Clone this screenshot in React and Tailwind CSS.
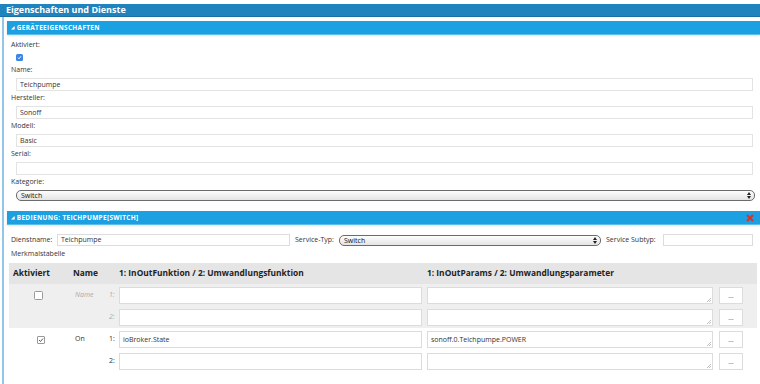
import React from 'react';

const Label = ({ children, className = '' }) => (
  <div className={`h-[12px] leading-[12px] ${className}`}>{children}</div>
);

const Field = ({ label, value }) => (
  <div>
    <Label className="mt-[1px]">{label}</Label>
    <div className="ml-[5px] mr-[7px] h-[13px] border border-[#e3e3e3] bg-white px-[3px] leading-[11px] mt-[2px]">{value}</div>
  </div>
);

const Select = ({ value, className = '' }) => (
  <div className={`flex items-center h-[11px] rounded-[5px] border border-[#6b6b6b] bg-gradient-to-b from-[#fdfdfd] to-[#e4e4e4] pl-[4px] pr-[3px] ${className}`}>
    <span className="flex-1 leading-[9px] text-[#111]">{value}</span>
    <svg width="4" height="7" viewBox="0 0 4 7"><path d="M0 3 L2 0 L4 3 Z M0 4 L2 7 L4 4 Z" fill="#222" /></svg>
  </div>
);

const Bar = ({ title, close }) => (
  <div className="flex items-center h-[14px] bg-[#1ba0e1] border-b border-[#5fbdea] shadow-[0_1px_2px_rgba(0,0,0,0.12)] pl-[4px] pr-[5px] text-white font-bold text-[6.5px] tracking-[0.3px] uppercase">
    <span className="text-[4.5px] mr-[2px]">◢</span>
    <span className="flex-1">{title}</span>
    {close && (
      <svg width="8" height="8" viewBox="0 0 8 8" className="mr-[1px]">
        <path d="M1 1 L7 7 M7 1 L1 7" stroke="#d9342b" strokeWidth="2.2" />
      </svg>
    )}
  </div>
);

const Textarea = ({ value }) => (
  <div className="relative flex-1 h-[17px] border border-[#dcdcdc] bg-white px-[3px] leading-[15px]">
    {value}
    <svg width="5" height="5" viewBox="0 0 5 5" className="absolute right-[1px] bottom-[1px]">
      <path d="M1 5 L5 1 M3 5 L5 3" stroke="#999" strokeWidth="0.6" />
    </svg>
  </div>
);

const SubRow = ({ num, fn, param, dim }) => (
  <div className="flex items-center h-[17px]">
    <span className={`w-[13px] pl-[5px] ${dim ? 'italic text-[#aaa]' : 'text-[#333]'}`}>{num}</span>
    <div className="w-[307px] pl-[2px] pr-[2px]">
      <div className="h-[17px] border border-[#dcdcdc] bg-white px-[3px] leading-[15px]">{fn}</div>
    </div>
    <div className="w-[292px] flex pl-[3px] pr-[3px]">
      <Textarea value={param} />
    </div>
    <div className="flex-1 pl-[3px]">
      <div className="w-[24px] h-[17px] border border-[#dcdcdc] bg-white flex items-center justify-center text-[#555] leading-none">…</div>
    </div>
  </div>
);

const Row = ({ checked, name, rows, dim, bg }) => (
  <div className={`flex ${bg} pt-[3px] pb-[2px]`}>
    <div className="w-[58px] flex justify-center h-[17px] items-center">
      {checked ? (
        <span className="w-[8px] h-[8px] ml-[6px] border border-[#999] rounded-[1px] bg-white flex items-center justify-center">
          <svg width="6" height="6" viewBox="0 0 6 6"><path d="M1 3 L2.5 4.5 L5 1.5" stroke="#444" strokeWidth="0.9" fill="none" /></svg>
        </span>
      ) : (
        <span className="w-[9px] h-[9px] border border-[#999] rounded-[1.5px] bg-white" />
      )}
    </div>
    <div className={`w-[37px] h-[17px] flex items-center pl-[8px] ${dim ? 'italic text-[#aaa]' : ''}`}>{name}</div>
    <div className="flex-1 flex flex-col gap-[5px]">
      {rows.map((r, i) => (
        <SubRow key={i} num={`${i + 1}:`} fn={r[0]} param={r[1]} dim={dim} />
      ))}
    </div>
  </div>
);

export default function App() {
  return (
    <div className="w-[760px] h-[384px] overflow-hidden bg-white pt-[4px] text-[7px] text-[#333]" style={{ fontFamily: '"Open Sans", "DejaVu Sans", sans-serif' }}>
      <div className="h-[13px] bg-[#1f84be] border-b border-[#1a6fa3] text-white font-bold text-[9px] leading-[12px] pl-[6px]">
        Eigenschaften und Dienste
      </div>
      <div className="border-l-2 border-[#93c5e8] ml-[2px] pl-[3px] pt-[4px] h-full">
        <Bar title="Geräteeigenschaften" />
        <div className="pl-[4px] pt-[4px]">
          <Label>Aktiviert:</Label>
          <div className="h-[12px] flex items-center pl-[5px]">
            <span className="w-[7px] h-[7px] rounded-[1.5px] bg-[#3a86e8] flex items-center justify-center">
              <svg width="5" height="5" viewBox="0 0 5 5"><path d="M1 2.6 L2 3.8 L4 1.2" stroke="#fff" strokeWidth="0.9" fill="none" /></svg>
            </span>
          </div>
          <Field label="Name:" value="Teichpumpe" />
          <Field label="Hersteller:" value="Sonoff" />
          <Field label="Modell:" value="Basic" />
          <Field label="Serial:" value="" />
          <Label className="mt-[1px]">Kategorie:</Label>
          <Select value="Switch" className="ml-[5px] mr-[5px] mt-[2px]" />
        </div>
        <div className="mt-[10px]">
          <Bar title="Bedienung: Teichpumpe[Switch]" close />
        </div>
        <div className="pl-[4px]">
          <div className="flex items-center h-[12px] mt-[9px]">
            <span className="w-[46px]">Dienstname:</span>
            <div className="w-[233px] h-[12px] border border-[#dcdcdc] px-[3px] leading-[10px]">Teichpumpe</div>
            <span className="ml-[5px] w-[44px]">Service-Typ:</span>
            <Select value="Switch" className="w-[262px] h-[10px]" />
            <span className="ml-[5px] w-[57px]">Service Subtyp:</span>
            <div className="w-[90px] h-[12px] border border-[#dcdcdc]" />
          </div>
          <Label className="mt-[2px]">Merkmalstabelle</Label>
          <div className="ml-[-2px] mr-[3px] mt-[3px]">
            <div className="flex items-center h-[21px] bg-[#e5e5e5] font-bold text-[8.4px] text-[#222]">
              <span className="w-[58px] pl-[4px]">Aktiviert</span>
              <span className="w-[50px] pl-[6px]">Name</span>
              <span className="w-[308px] pl-[2px]">1: InOutFunktion / 2: Umwandlungsfunktion</span>
              <span className="flex-1 pl-[2px]">1: InOutParams / 2: Umwandlungsparameter</span>
            </div>
            <Row checked={false} name="Name" dim bg="bg-[#efefef]" rows={[['', ''], ['', '']]} />
            <Row checked name="On" bg="bg-white" rows={[['ioBroker.State', 'sonoff.0.Teichpumpe.POWER'], ['', '']]} />
          </div>
        </div>
      </div>
    </div>
  );
}
